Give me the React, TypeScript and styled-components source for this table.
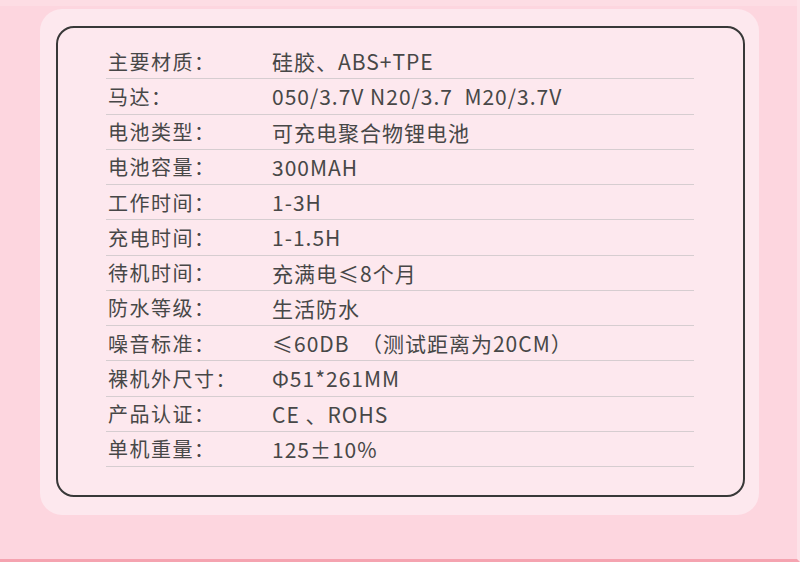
import React from 'react';
import styled, { createGlobalStyle } from 'styled-components';

interface ISpec {
  label: string;
  value: string;
}

const specs: ISpec[] = [
  { label: '主要材质：', value: '硅胶、ABS+TPE' },
  { label: '马达：', value: '050/3.7V N20/3.7  M20/3.7V' },
  { label: '电池类型：', value: '可充电聚合物锂电池' },
  { label: '电池容量：', value: '300MAH' },
  { label: '工作时间：', value: '1-3H' },
  { label: '充电时间：', value: '1-1.5H' },
  { label: '待机时间：', value: '充满电≤8个月' },
  { label: '防水等级：', value: '生活防水' },
  { label: '噪音标准：', value: '≤60DB  （测试距离为20CM）' },
  { label: '裸机外尺寸：', value: 'Φ51*261MM' },
  { label: '产品认证：', value: 'CE 、ROHS' },
  { label: '单机重量：', value: '125±10%' },
];

function App() {
  return (
    <>
      <GlobalStyle />
      <Page>
        <Panel>
          <SpecBox>
            <SpecList>
              {specs.map(spec => (
                <SpecRow key={spec.label}>
                  <Label>{spec.label}</Label>
                  <Value>{spec.value}</Value>
                </SpecRow>
              ))}
            </SpecList>
          </SpecBox>
        </Panel>
      </Page>
    </>
  );
}

export default App;

const GlobalStyle = createGlobalStyle`
  html, body {
    margin: 0;
    padding: 0;
  }
  body {
    font-family: 'Noto Sans CJK SC', 'Noto Sans', sans-serif;
    background: #fdd6df;
  }
`;

const Page = styled.div`
  width: 800px;
  height: 562px;
  box-sizing: border-box;
  padding: 9px 0 0 40px;
  background: linear-gradient(to bottom, #fddde4 0, #fddde4 6px, #fdd6df 6px);
  border-bottom: 3px solid #f5a3b0;
  border-right: 3px solid #fde2e8;
`;

const Panel = styled.div`
  width: 719px;
  height: 506px;
  box-sizing: border-box;
  padding: 17px 14px 0 16px;
  border-radius: 22px;
  background: #fde8ee;
`;

const SpecBox = styled.div`
  width: 689px;
  height: 471px;
  box-sizing: border-box;
  padding: 16px 0 0 48px;
  border: 2px solid #383838;
  border-radius: 18px;
`;

const SpecList = styled.div`
  width: 588px;
  display: flex;
  flex-direction: column;
`;

const SpecRow = styled.div`
  display: flex;
  align-items: center;
  height: 35.25px;
  box-sizing: border-box;
  padding-left: 2px;
  border-bottom: 1px solid #d6cdd0;
`;

const Label = styled.div`
  width: 164px;
  font-size: 20px;
  letter-spacing: 1.5px;
  color: #474747;
  white-space: nowrap;
`;

const Value = styled.div`
  font-size: 21px;
  letter-spacing: 1px;
  color: #474747;
  white-space: pre;
`;
